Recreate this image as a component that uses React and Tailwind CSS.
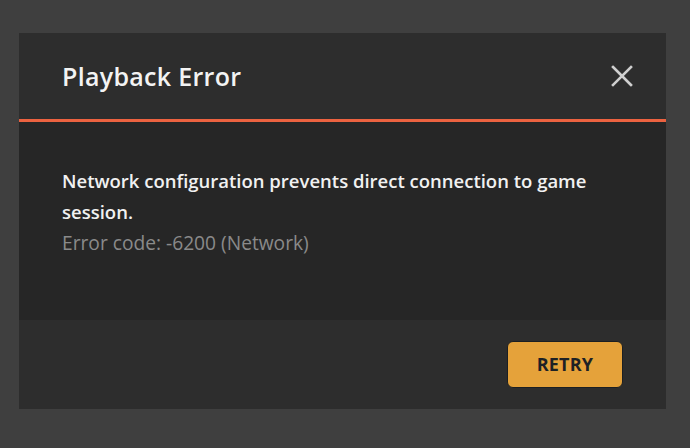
import React from 'react';

function CloseIcon() {
  return (
    <svg width="22" height="22" viewBox="0 0 22 22" fill="none">
      <path d="M2 2L20 20M20 2L2 20" stroke="#cfcfcf" strokeWidth="2.6" strokeLinecap="square" />
    </svg>
  );
}

export default function App() {
  return (
    <div className="min-h-screen w-full bg-[#3f3f3f] pt-[33px] pl-[19px]" style={{ fontFamily: '"Open Sans", "Noto Sans", sans-serif' }}>
      <div className="w-[647px] flex flex-col">
        {/* header */}
        <div className="h-[86px] bg-[#2d2d2d] flex items-center justify-between pl-[43px] pr-[33px]">
          <h1 className="text-[25px] leading-[32px] font-semibold tracking-[0.3px] text-[#f3f3f3]">Playback Error</h1>
          <button className="w-[22px] h-[22px] flex items-center justify-center">
            <CloseIcon />
          </button>
        </div>
        <div className="h-[3px] bg-[#ec6240]" />

        {/* body */}
        <div className="h-[198px] bg-[#262626] pt-[43px] px-[43px]">
          <p className="text-[18.5px] leading-[31px] font-semibold text-[#f1f1f1]">
            Network configuration prevents direct connection to game session.
          </p>
          <p className="text-[19.2px] leading-[31px] font-medium text-[#8a8a8a]">Error code: -6200 (Network)</p>
        </div>

        {/* footer */}
        <div className="h-[89px] bg-[#2d2d2d] flex items-center justify-end pr-[43px]">
          <button className="w-[116px] h-[47px] rounded-[6px] bg-[#e5a23a] border border-[#1c1f22] text-[18px] font-bold text-[#1d2125] tracking-[0.01em]">
            RETRY
          </button>
        </div>
      </div>
    </div>
  );
}
